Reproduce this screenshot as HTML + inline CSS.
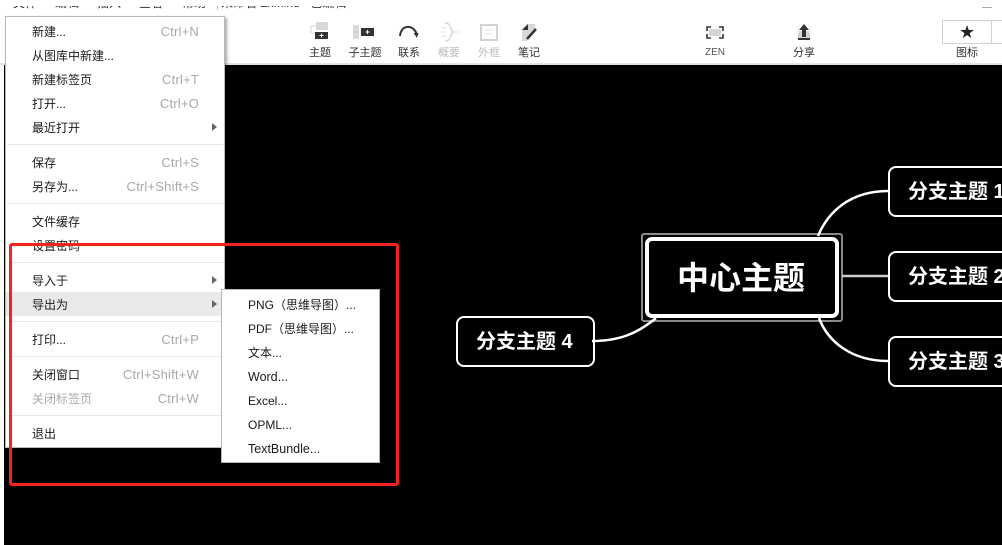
<!DOCTYPE html>
<html lang="zh">
<head>
<meta charset="utf-8">
<title>Mind map export menu</title>
<style>
html,body{margin:0;padding:0;background:#fff}
body{position:relative;width:1002px;height:545px;overflow:hidden;font-family:"Liberation Sans","Noto Sans CJK SC",sans-serif;font-size:12px;color:#222}
.abs,.m,.s,.sep,.arrow,.t,.tl{position:absolute}
#canvas{left:4px;top:65px;width:998px;height:480px;background:#000}
#tline{left:0;top:63px;width:1002px;height:2px;background:#e4e4e4}
.t{top:-4px;line-height:14px;white-space:nowrap;color:#333}
#tcover{left:0;top:0;width:1002px;height:6px;background:#fff}
.tl{top:46px;line-height:14px;font-size:11px;color:#333;transform:translateX(-50%);white-space:nowrap}
.tl.d{color:#bdbdbd}
#menu{left:5px;top:16px;width:218px;height:430px;background:#fff;border:1px solid #b8b8b8;box-shadow:2px 2px 3px rgba(0,0,0,.35)}
#sub{left:221px;top:289px;width:157px;height:172px;background:#fff;border:1px solid #b8b8b8}
#hl{left:6px;top:292px;width:216px;height:24px;background:#e9e9e9}
.m,.s{line-height:16px;white-space:nowrap;color:#1a1a1a}
.m{left:32px}
.s{right:803px;color:#a8a8a8;font-size:13px;letter-spacing:.2px}
.m.d{color:#a9a9a9}
.sep{left:7px;width:216px;height:1px;background:#e6e6e6}
.arrow{left:212px;width:0;height:0;border-left:5px solid #666;border-top:4px solid transparent;border-bottom:4px solid transparent}
.x{position:absolute;left:248px;line-height:16px;white-space:nowrap;color:#1a1a1a}
#red{left:9px;top:243px;width:384px;height:237px;border:3px solid #f3241a;border-radius:3px}
#map{left:0;top:0}
.topic{position:absolute;box-sizing:border-box;background:#000;color:#fff;font-weight:bold;white-space:nowrap}
.b{border:2px solid #fff;border-radius:8px;height:51px;line-height:48px;font-size:20px;padding-left:18px}
#sel{left:641px;top:233px;width:202px;height:89px;border:2px solid #8a8a8a;border-radius:3px;position:absolute;box-sizing:border-box}
#ct{left:645px;top:237px;width:194px;height:81px;border:4px solid #fff;border-radius:7px;line-height:74px;font-size:32px;text-align:center;text-indent:-2px}
#star{left:942px;top:20px;width:60px;height:24px;box-sizing:border-box;border:1px solid #d0d0d0;border-right:0;background:#fff}
#star i{position:absolute;left:48px;top:0;width:1px;height:22px;background:#d0d0d0}
#star span{position:absolute;left:16px;top:1px;font-size:18px;line-height:21px;color:#222;font-family:"DejaVu Sans",sans-serif}
</style>
</head>
<body>
<span class="t" style="left:13px">文件</span>
<span class="t" style="left:55px">编辑</span>
<span class="t" style="left:97px">插入</span>
<span class="t" style="left:139px">查看</span>
<span class="t" style="left:182px">帮助</span>
<span class="t" style="left:216px;color:#bbb">|</span>
<span class="t" style="left:221px">未命名 Zxmind - 已编辑</span>
<div id="tcover" class="abs"></div>

<svg class="abs" style="position:absolute;left:300px;top:18px" width="250" height="28" viewBox="300 18 250 28">
  <!-- topic -->
  <rect x="316" y="22" width="12" height="8" fill="#d8d8d8"/>
  <path d="M316 26H311V33H315" fill="none" stroke="#d5d5d5"/>
  <rect x="315" y="32" width="13" height="7" fill="#333"/>
  <path d="M321.500 33.500V37.500M319.500 35.500H323.500" stroke="#fff" stroke-width="1"/>
  <!-- subtopic -->
  <rect x="353" y="25" width="6" height="14" fill="#d8d8d8"/>
  <path d="M359 32H361" stroke="#d5d5d5"/>
  <rect x="361" y="28" width="13" height="8" fill="#333"/>
  <path d="M367.500 30V34M365.500 32H369.500" stroke="#fff"/>
  <!-- relation -->
  <path d="M400 36C401 24 414 24 417 35" fill="none" stroke="#333" stroke-width="2"/>
  <path d="M413.500 33L418.500 33L417 38Z" fill="#333"/>
  <!-- summary -->
  <path d="M445 23C452 23 450 31 453 32C450 33 452 41 445 41" fill="none" stroke="#d5d5d5" stroke-width="1.500"/>
  <path d="M453 32H459M441 28H446M441 32H446M441 36H446" stroke="#e0e0e0"/>
  <!-- boundary -->
  <rect x="481" y="25" width="16" height="15" fill="none" stroke="#d2d2d2" stroke-width="2"/>
  <path d="M485 30H491M485 34H491" stroke="#e2e2e2"/>
  <!-- note -->
  <path d="M522 29L528 24H535V30L528 38L527 41H522Z" fill="#d8d8d8"/>
  <path d="M522 30L528 24V30Z" fill="#333"/>
  <path d="M527 39L536 29" stroke="#333" stroke-width="2.500"/>
</svg>
<svg style="position:absolute;left:700px;top:20px" width="120" height="24" viewBox="700 20 120 24">
  <path d="M707 31V27H711M719 27H723V31M723 34V38H719M711 38H707V34" fill="none" stroke="#333" stroke-width="1.600"/>
  <rect x="709" y="29" width="12" height="7" fill="#d5d5d5"/>
  <rect x="798" y="31" width="12" height="8" fill="#d5d5d5"/>
  <path d="M804 24L809 30H806V37H802V30H799Z" fill="#333"/>
  <rect x="798" y="38" width="12" height="2" fill="#333"/>
</svg>
<div style="position:absolute;left:982px;top:7px;width:10px;height:1px;background:#aaa"></div>

<span class="tl" style="left:320px">主题</span>
<span class="tl" style="left:365px">子主题</span>
<span class="tl" style="left:409px">联系</span>
<span class="tl d" style="left:449px">概要</span>
<span class="tl d" style="left:489px">外框</span>
<span class="tl" style="left:529px">笔记</span>
<span class="tl" style="left:715px;font-size:10px;color:#555">ZEN</span>
<span class="tl" style="left:804px">分享</span>
<span class="tl" style="left:967px">图标</span>
<div id="star" class="abs"><span>★</span><i></i></div>

<div id="tline" class="abs"></div>
<div id="canvas" class="abs"></div>

<div id="sel"></div>
<div id="ct" class="topic">中心主题</div>
<div class="topic b" style="left:888px;top:166px;width:130px">分支主题 1</div>
<div class="topic b" style="left:888px;top:251px;width:130px">分支主题 2</div>
<div class="topic b" style="left:888px;top:336px;width:130px">分支主题 3</div>
<div class="topic b" style="left:456px;top:316px;width:139px">分支主题 4</div>
<svg id="map" class="abs" width="1002" height="545" viewBox="0 0 1002 545">
  <g fill="none" stroke="#fff" stroke-width="2.500">
    <path d="M818 236C828 212 850 191 888 191"/>
    <path d="M842 276H888" stroke="#ccc"/>
    <path d="M819 318C828 342 852 361 888 361"/>
    <path d="M592 341C620 341 638 333 656 318"/>
  </g>
</svg>

<div id="menu" class="abs"></div>
<div id="hl" class="abs"></div>
<span class="m" style="top:24px">新建...</span><span class="s" style="top:24px">Ctrl+N</span>
<span class="m" style="top:48px">从图库中新建...</span>
<span class="m" style="top:72px">新建标签页</span><span class="s" style="top:72px">Ctrl+T</span>
<span class="m" style="top:96px">打开...</span><span class="s" style="top:96px">Ctrl+O</span>
<span class="m" style="top:120px">最近打开</span><div class="arrow" style="top:123px"></div>
<div class="sep" style="top:144px"></div>
<span class="m" style="top:155px">保存</span><span class="s" style="top:155px">Ctrl+S</span>
<span class="m" style="top:179px">另存为...</span><span class="s" style="top:179px">Ctrl+Shift+S</span>
<div class="sep" style="top:203px"></div>
<span class="m" style="top:214px">文件缓存</span>
<span class="m" style="top:238px">设置密码</span>
<div class="sep" style="top:262px"></div>
<span class="m" style="top:273px">导入于</span><div class="arrow" style="top:276px"></div>
<span class="m" style="top:297px">导出为</span><div class="arrow" style="top:300px"></div>
<div class="sep" style="top:321px"></div>
<span class="m" style="top:332px">打印...</span><span class="s" style="top:332px">Ctrl+P</span>
<div class="sep" style="top:356px"></div>
<span class="m" style="top:367px">关闭窗口</span><span class="s" style="top:367px">Ctrl+Shift+W</span>
<span class="m d" style="top:391px">关闭标签页</span><span class="s" style="top:391px">Ctrl+W</span>
<div class="sep" style="top:415px"></div>
<span class="m" style="top:426px">退出</span>

<div id="sub" class="abs"></div>
<span class="x" style="top:297px">PNG（思维导图）...</span>
<span class="x" style="top:321px">PDF（思维导图）...</span>
<span class="x" style="top:345px">文本...</span>
<span class="x" style="top:369px;font-size:12.500px">Word...</span>
<span class="x" style="top:393px">Excel...</span>
<span class="x" style="top:417px">OPML...</span>
<span class="x" style="top:441px;font-size:12.500px">TextBundle...</span>

<div id="red" class="abs"></div>
</body>
</html>
